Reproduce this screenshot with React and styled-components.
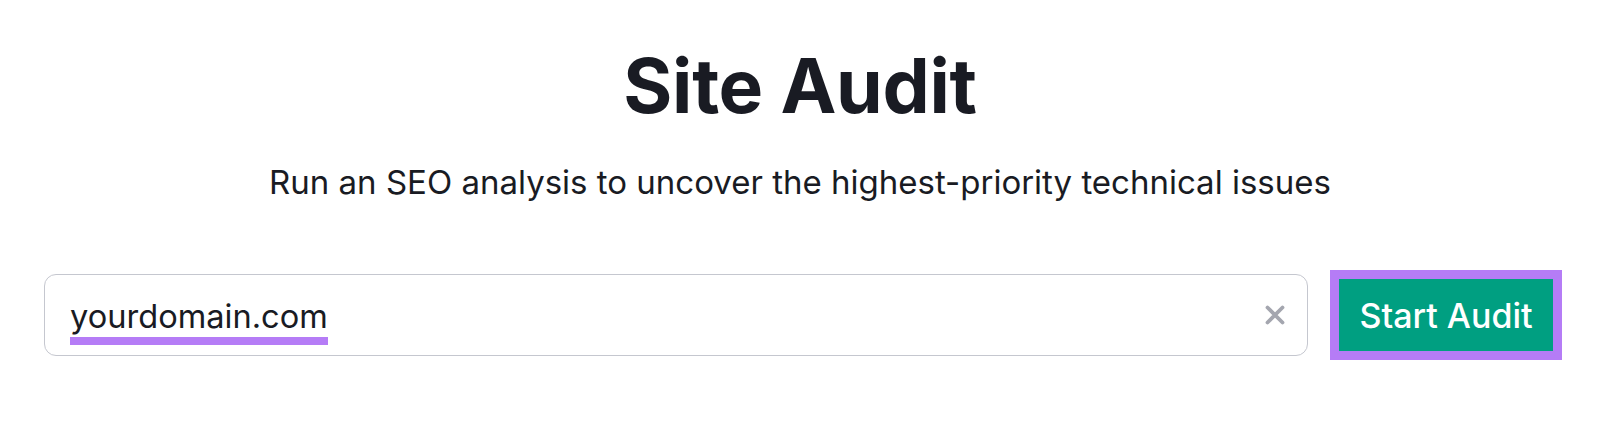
import styled, { createGlobalStyle } from "styled-components";

const GlobalStyle = createGlobalStyle`
  html, body {
    margin: 0;
    padding: 0;
    background: #ffffff;
  }
  body {
    font-family: Inter, "Noto Sans", "Liberation Sans", sans-serif;
    color: #191b23;
  }
`;

const Page = styled.div`
  width: 1600px;
  height: 434px;
  display: flex;
  flex-direction: column;
  align-items: center;
  box-sizing: border-box;
  padding-top: 48px;
`;

const Title = styled.h1`
  margin: 0;
  font-size: 75px;
  line-height: 1;
  font-weight: 700;
  letter-spacing: -0.3px;
  color: #191b23;
`;

const Subtitle = styled.p`
  margin: 43px 0 0;
  font-size: 33px;
  line-height: 1;
  font-weight: 400;
  color: #191b23;
`;

const Form = styled.div`
  display: flex;
  align-items: center;
  gap: 22px;
  margin-top: 71px;
  width: 1518px;
  padding-left: 6px;
`;

const Field = styled.div`
  flex: 1;
  height: 82px;
  box-sizing: border-box;
  border: 1.5px solid #c5c7cf;
  border-radius: 12px;
  display: flex;
  align-items: center;
  padding: 0 20px 0 25px;
`;

const Value = styled.span`
  flex: 1;
  display: flex;
  padding-top: 15px;
`;

const Marked = styled.span`
  font-size: 32.6px;
  line-height: 1;
  padding-bottom: 5px;
  border-bottom: 8px solid #b57cf6;
  color: #191b23;
`;

const Clear = styled.button`
  border: none;
  background: none;
  padding: 0;
  width: 24px;
  height: 24px;
  display: flex;
  align-items: center;
  justify-content: center;
  cursor: pointer;
`;

const Highlight = styled.div`
  border: 9px solid #b57cf6;
  display: flex;
`;

const StartButton = styled.button`
  height: 72px;
  width: 214px;
  border: none;
  background: #009f81;
  color: #ffffff;
  font-family: Inter, "Noto Sans", "Liberation Sans", sans-serif;
  font-size: 34px;
  font-weight: 500;
  padding: 0;
  cursor: pointer;
`;

export default function App() {
  return (
    <>
      <GlobalStyle />
      <Page>
        <Title>Site Audit</Title>
        <Subtitle>
          Run an SEO analysis to uncover the highest-priority technical issues
        </Subtitle>
        <Form>
          <Field>
            <Value>
              <Marked>yourdomain.com</Marked>
            </Value>
            <Clear aria-label="Clear">
              <svg width="22" height="22" viewBox="0 0 22 22">
                <path
                  d="M3.5 3.5 L18.5 18.5 M18.5 3.5 L3.5 18.5"
                  stroke="#a4a6af"
                  strokeWidth="3.8"
                  strokeLinecap="round"
                />
              </svg>
            </Clear>
          </Field>
          <Highlight>
            <StartButton>Start Audit</StartButton>
          </Highlight>
        </Form>
      </Page>
    </>
  );
}
